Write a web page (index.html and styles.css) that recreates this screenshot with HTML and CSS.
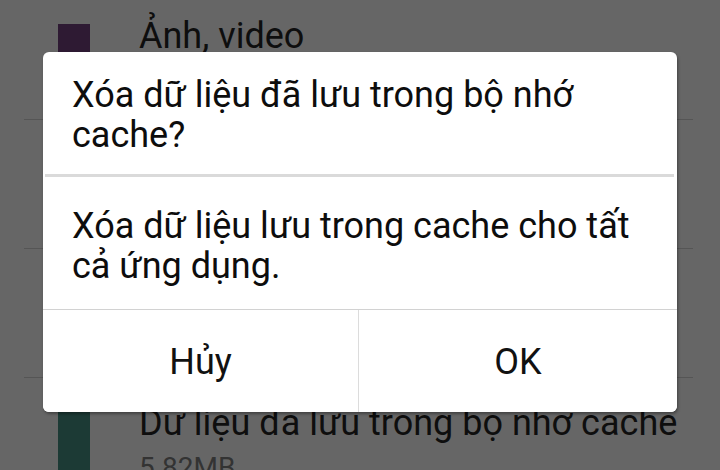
FILE: index.html
```html
<!DOCTYPE html>
<html lang="vi">
<head>
<meta charset="utf-8">
<title>Xóa cache</title>
<link rel="stylesheet" href="styles.css">
</head>
<body>
<div class="screen">
  <ul class="list">
    <li class="row">
      <span class="swatch swatch-photo"></span>
      <div class="row-text">
        <div class="row-title">Ảnh, video</div>
      </div>
    </li>
    <li class="row">
      <span class="swatch swatch-audio"></span>
    </li>
    <li class="row">
      <span class="swatch swatch-dl"></span>
    </li>
    <li class="row">
      <span class="swatch swatch-cache"></span>
      <div class="row-text">
        <div class="row-title">Dữ liệu đã lưu trong bộ nhớ cache</div>
        <div class="row-sub">5.82MB</div>
      </div>
    </li>
  </ul>

  <div class="dialog">
    <div class="dialog-title">Xóa dữ liệu đã lưu trong bộ nhớ cache?</div>
    <div class="dialog-divider"></div>
    <div class="dialog-body">Xóa dữ liệu lưu trong cache cho tất cả ứng dụng.</div>
    <div class="dialog-actions">
      <button class="btn">Hủy</button>
      <button class="btn">OK</button>
    </div>
  </div>
</div>
</body>
</html>
```

FILE: styles.css
```css
* { box-sizing: border-box; }

html, body {
  margin: 0;
  padding: 0;
}

body {
  width: 720px;
  height: 470px;
  overflow: hidden;
  background: #666666;
  font-family: Roboto, "Noto Sans", "DejaVu Sans", sans-serif;
  color: #111111;
}

.screen {
  position: relative;
  width: 720px;
  height: 470px;
  overflow: hidden;
}

.list {
  list-style: none;
  margin: -9px 0 0 0;
  padding: 0;
}

.row {
  display: flex;
  align-items: flex-start;
  height: 129px;
  margin: 0 27px 0 24px;
  border-bottom: 1px solid #555555;
  padding: 33px 0 0 34px;
}

.swatch {
  width: 32px;
  height: 96px;
  flex: none;
}

.swatch-photo { background: #2e1a33; }
.swatch-audio { background: #3a2a1a; }
.swatch-dl { background: #1a2a3a; }
.swatch-cache { background: #1c3a35; }

.row-text {
  margin-left: 49px;
  margin-top: -8px;
}

.row-title {
  font-size: 36px;
  line-height: 40px;
  color: #0e0e0e;
  white-space: nowrap;
}

.row-sub {
  font-size: 28px;
  line-height: 34px;
  color: #333333;
  margin-top: 8px;
}

.dialog {
  position: absolute;
  left: 43px;
  top: 52px;
  width: 634px;
  height: 360px;
  background: #ffffff;
  border-radius: 6px;
  box-shadow: 1px 2px 3px rgba(0, 0, 0, 0.35);
  display: flex;
  flex-direction: column;
  overflow: hidden;
}

.dialog-title {
  font-size: 36px;
  line-height: 40px;
  padding: 23px 40px 18px 29px;
  height: 122px;
  color: #0d0d0d;
}

.dialog-divider {
  height: 3px;
  margin: 0 3px 0 2px;
  background: #dadada;
  flex: none;
}

.dialog-body {
  font-size: 36px;
  line-height: 40px;
  padding: 29px 30px 0 29px;
  height: 133px;
  color: #0d0d0d;
  border-bottom: 1px solid #d2d2d2;
}

.dialog-actions {
  flex: 1;
  display: grid;
  grid-template-columns: 315px 1fr;
}

.btn {
  border: 0;
  background: #ffffff;
  font-family: inherit;
  font-size: 36px;
  color: #111111;
  padding: 2px 0 0 0;
  margin: 0;
}

.btn + .btn {
  border-left: 1px solid #dcdcdc;
}
```
